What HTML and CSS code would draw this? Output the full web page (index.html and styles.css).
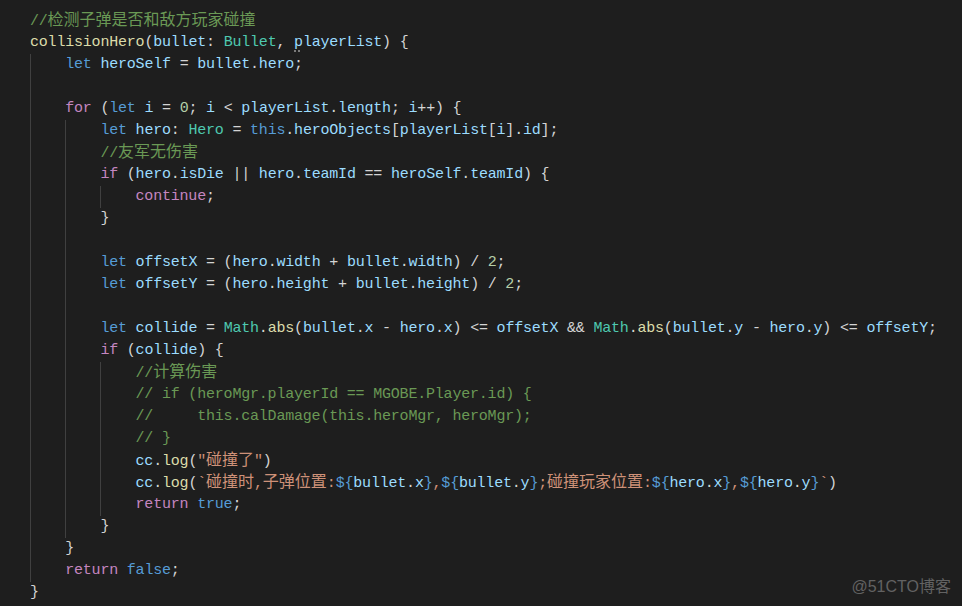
FILE: index.html
```html
<!DOCTYPE html>
<html lang="zh-CN">
<head>
  <meta charset="UTF-8">
  <meta name="viewport" content="width=device-width, initial-scale=1.0">
  <title>collisionHero</title>
  <link rel="stylesheet" href="styles.css">
</head>
<body>

  <section class="editor">
    <div class="ln"><span class="cm">//<span class="zh">检测子弹是否和敌方玩家碰撞</span></span></div>
    <div class="ln"><span class="f">collisionHero</span>(<span class="v">bullet</span>: <span class="t">Bullet</span>, <span class="v"><span class="hint">p</span>layerList</span>) {</div>
    <div class="ln"><i class="ind"></i><span class="k">let</span> <span class="v">heroSelf</span> = <span class="v">bullet</span>.<span class="v">hero</span>;</div>
    <div class="ln"><i class="ind"></i></div>
    <div class="ln"><i class="ind"></i><span class="c">for</span> (<span class="k">let</span> <span class="v">i</span> = <span class="n">0</span>; <span class="v">i</span> &lt; <span class="v">playerList</span>.<span class="v">length</span>; <span class="v">i</span>++) {</div>
    <div class="ln"><i class="ind"></i><i class="ind"></i><span class="k">let</span> <span class="v">hero</span>: <span class="t">Hero</span> = <span class="k">this</span>.<span class="v">heroObjects</span>[<span class="v">playerList</span>[<span class="v">i</span>].<span class="v">id</span>];</div>
    <div class="ln"><i class="ind"></i><i class="ind"></i><span class="cm">//<span class="zh">友军无伤害</span></span></div>
    <div class="ln"><i class="ind"></i><i class="ind"></i><span class="c">if</span> (<span class="v">hero</span>.<span class="v">isDie</span> || <span class="v">hero</span>.<span class="v">teamId</span> == <span class="v">heroSelf</span>.<span class="v">teamId</span>) {</div>
    <div class="ln"><i class="ind"></i><i class="ind"></i><i class="ind"></i><span class="c">continue</span>;</div>
    <div class="ln"><i class="ind"></i><i class="ind"></i>}</div>
    <div class="ln"><i class="ind"></i><i class="ind"></i></div>
    <div class="ln"><i class="ind"></i><i class="ind"></i><span class="k">let</span> <span class="v">offsetX</span> = (<span class="v">hero</span>.<span class="v">width</span> + <span class="v">bullet</span>.<span class="v">width</span>) / <span class="n">2</span>;</div>
    <div class="ln"><i class="ind"></i><i class="ind"></i><span class="k">let</span> <span class="v">offsetY</span> = (<span class="v">hero</span>.<span class="v">height</span> + <span class="v">bullet</span>.<span class="v">height</span>) / <span class="n">2</span>;</div>
    <div class="ln"><i class="ind"></i><i class="ind"></i></div>
    <div class="ln"><i class="ind"></i><i class="ind"></i><span class="k">let</span> <span class="v">collide</span> = <span class="t">Math</span>.<span class="f">abs</span>(<span class="v">bullet</span>.<span class="v">x</span> - <span class="v">hero</span>.<span class="v">x</span>) &lt;= <span class="v">offsetX</span> &amp;&amp; <span class="t">Math</span>.<span class="f">abs</span>(<span class="v">bullet</span>.<span class="v">y</span> - <span class="v">hero</span>.<span class="v">y</span>) &lt;= <span class="v">offsetY</span>;</div>
    <div class="ln"><i class="ind"></i><i class="ind"></i><span class="c">if</span> (<span class="v">collide</span>) {</div>
    <div class="ln"><i class="ind"></i><i class="ind"></i><i class="ind"></i><span class="cm">//<span class="zh">计算伤害</span></span></div>
    <div class="ln"><i class="ind"></i><i class="ind"></i><i class="ind"></i><span class="cm">// if (heroMgr.playerId == MGOBE.Player.id) {</span></div>
    <div class="ln"><i class="ind"></i><i class="ind"></i><i class="ind"></i><span class="cm">//     this.calDamage(this.heroMgr, heroMgr);</span></div>
    <div class="ln"><i class="ind"></i><i class="ind"></i><i class="ind"></i><span class="cm">// }</span></div>
    <div class="ln"><i class="ind"></i><i class="ind"></i><i class="ind"></i><span class="v">cc</span>.<span class="f">log</span>(<span class="s">"<span class="zh">碰撞了</span>"</span>)</div>
    <div class="ln"><i class="ind"></i><i class="ind"></i><i class="ind"></i><span class="v">cc</span>.<span class="f">log</span>(<span class="s">`<span class="zh">碰撞时</span>,<span class="zh">子弹位置</span>:</span><span class="k">${</span><span class="v">bullet</span>.<span class="v">x</span><span class="k">}</span><span class="s">,</span><span class="k">${</span><span class="v">bullet</span>.<span class="v">y</span><span class="k">}</span><span class="s">;<span class="zh">碰撞玩家位置</span>:</span><span class="k">${</span><span class="v">hero</span>.<span class="v">x</span><span class="k">}</span><span class="s">,</span><span class="k">${</span><span class="v">hero</span>.<span class="v">y</span><span class="k">}</span><span class="s">`</span>)</div>
    <div class="ln"><i class="ind"></i><i class="ind"></i><i class="ind"></i><span class="c">return</span> <span class="k">true</span>;</div>
    <div class="ln"><i class="ind"></i><i class="ind"></i>}</div>
    <div class="ln"><i class="ind"></i>}</div>
    <div class="ln"><i class="ind"></i><span class="c">return</span> <span class="k">false</span>;</div>
    <div class="ln">}</div>
  </section>

  <div class="watermark">@51CTO博客</div>

</body>
</html>
```

FILE: styles.css
```css
body {
  background-color: #1e1e1e;
  margin: 0;
  height: 606px;
  overflow: hidden;
}

.editor {
  padding: 10px 0 0 30px;
  font-family: "Liberation Mono", "Noto Sans CJK SC", monospace;
  font-size: 15px;
  letter-spacing: -0.2px;
  color: #d4d4d4;
}

.ln {
  height: 22px;
  line-height: 22px;
  white-space: pre;
}

.ind {
  display: inline-block;
  box-sizing: border-box;
  width: 35.2px;
  height: 22px;
  vertical-align: top;
  border-left: 1px solid #404040;
}

.zh {
  font-family: "Noto Sans CJK SC", sans-serif;
  font-size: 16px;
  line-height: 16px;
  letter-spacing: 0;
}

.k { color: #569cd6; }
.c { color: #c586c0; }
.v { color: #9cdcfe; }
.f { color: #dcdcaa; }
.t { color: #4ec9b0; }
.n { color: #b5cea8; }
.s { color: #ce9178; }
.cm { color: #6a9955; }

.hint {
  text-decoration: underline dotted #9a9a9a;
  text-underline-offset: 5px;
}

.watermark {
  position: absolute;
  right: 11px;
  bottom: 9px;
  font-family: "Liberation Sans", "Noto Sans CJK SC", sans-serif;
  font-size: 16px;
  color: #626262;
}
```
